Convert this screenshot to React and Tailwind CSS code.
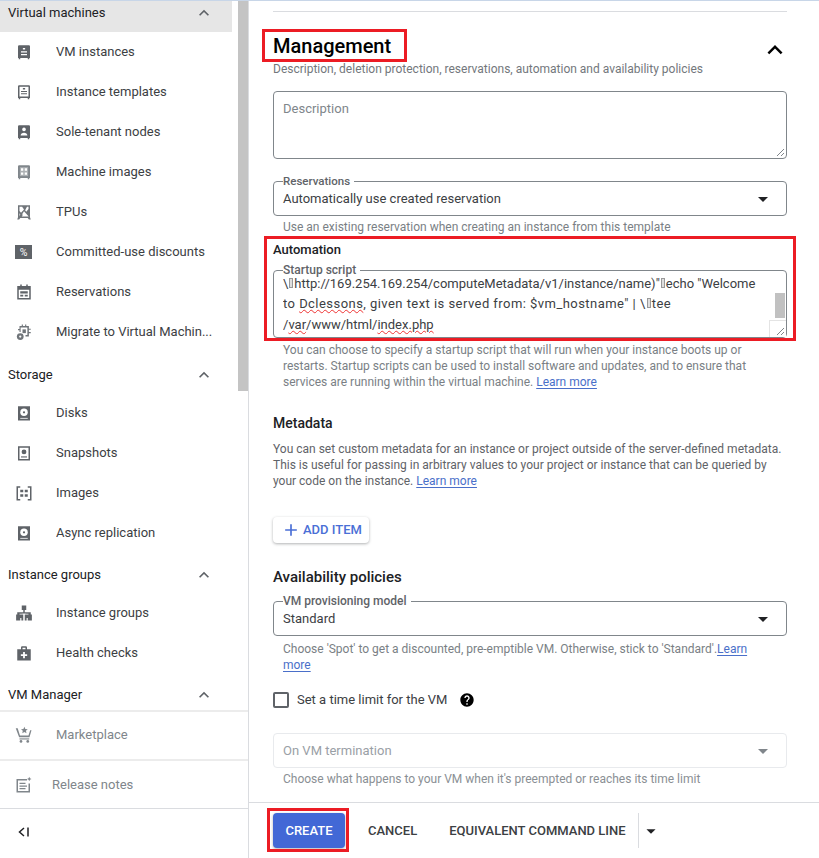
import React from "react";
import { MdKeyboardArrowUp, MdArrowDropDown, MdHelp, MdAdd } from "react-icons/md";

const Ic = ({ children, size = 18, className = "text-[#5f6368]" }) => (
  <svg viewBox="0 0 24 24" width={size} height={size} fill="currentColor" className={"shrink-0 " + className}>{children}</svg>
);
const W = "#fff";
const body = "M4 4.500A1.500 1.500 0 0 1 5.500 3h13A1.500 1.500 0 0 1 20 4.500V20h-1v1.500h-2V20H7v1.500H5V20H4z";
const icons = {
  vm: <Ic><path d={body} /><path d="M10.500 6.500h3v2h-3zM8 11h8v1.700H8zM8 14.500h8v1.700H8z" fill={W} /></Ic>,
  tpl: <Ic><path fillRule="evenodd" d={body + "M6 5v13h12V5z"} /><path d="M10.500 6.500h3v2h-3zM8 10.500h8v1.500H8zM8 13.500h8v1.500H8z" /></Ic>,
  sole: <Ic><path d={body} /><circle cx="12" cy="8.500" r="2.400" fill={W} /><path d="M7.500 16.500c0-2.200 2.200-3.500 4.500-3.500s4.500 1.300 4.500 3.500z" fill={W} /></Ic>,
  image: <Ic className="text-[#80868b]"><path d={body} /><path d="M6.500 5.500h11v12h-11z" fill={W} opacity=".35" /><path d="M8 7h3v3.300H8zM13 7h3v3.300h-3zM8 12.500h3v3.300H8zM13 12.500h3v3.300h-3z" fill={W} /></Ic>,
  tpu: <Ic className="text-[#70757a]"><path d="M4 3h16v16l1 3h-2.500L17 20H7l-1.500 2H3l1-3z" /><path d="M6 5h3.500L12 8.500 8 13 6 10.500zM18 5v3l-3 3.500-1.500-2L16 5zM6 13.500 7 15l-1 3zM12 11l6 6.500V18H9.500l-.5-.5L10.500 16 9.500 15z" fill={W} /></Ic>,
  pct: <svg width="17" height="14" viewBox="0 0 17 14" className="shrink-0"><path d="M0 0h17v3.500a3.500 3.500 0 0 1 0 7V14H0v-3.500a3.500 3.500 0 0 1 0-7z" fill="#5f6368" /><text x="8.500" y="11" textAnchor="middle" fontSize="10.500" fontFamily="Roboto" fill="#fff">%</text></svg>,
  cal: <Ic><path d="M7 2h2v2h6V2h2v2h4v18H3V4h4z" /><path d="M5 9h14v11H5z" fill={W} /><path d="M7 11h10v3H7zM7 15.500h4V18H7zM13 15.500h4V18h-4z" /></Ic>,
  migrate: <Ic className="text-[#70757a]"><path fillRule="evenodd" d="M9 2h1.500v2h3V2H15v2h3.500v3.500H21V9h-2.500v3H21v1.500h-2.500V18H14v-2h2.500V6h-9v6H6V9.500H4V8h2V4h3z" /><path d="M10 8.500h4.500v5H10z" /><circle cx="7" cy="18" r="4.500" /><circle cx="7" cy="18" r="1.500" fill={W} /></Ic>,
  disk: <Ic><path d="M4 3h16v19H4z" /><circle cx="12" cy="11" r="5" fill={W} /><circle cx="12" cy="11" r="1.500" /><path d="M7 18.500h10V20H7z" fill={W} opacity=".7" /></Ic>,
  snap: <Ic><path fillRule="evenodd" d="M4 3h16v19H4zM6 5v15h12V5z" /><circle cx="12" cy="10.500" r="3.200" /><path d="M8 16.500h8V18H8z" /></Ic>,
  imgs: <Ic><path d="M2 3h5v2H4v15h3v2H2zM17 3h5v19h-5v-2h3V5h-3z" /><path d="M7 7.500h4V11H7zM13 7.500h4V11h-4zM7 13.500h4V17H7zM13 13.500h4V17h-4z" /></Ic>,
  group: <Ic><path d="M9 2h6v6h-2v3h8v3h1.500v8H17v-3.500h-1.500V22H13v-8h5v-1h-2.500L12 12.500 8.500 13H6v1h5v8H8.500v-3.500H7V22H1.500v-8H3v-3h8V8H9z" /></Ic>,
  health: <Ic><path d="M8 7V4.500A1.500 1.500 0 0 1 9.500 3h5A1.500 1.500 0 0 1 16 4.500V7h5v15H3V7zm2 0h4V5h-4z" /><path d="M10.800 10.500h2.400v3h3v2.400h-3v3h-2.400v-3h-3v-2.400h3z" fill={W} /></Ic>,
  market: <Ic className="text-[#80868b]"><path d="M1 3h2.600l3 9.500H18l2.200-7H22L19.300 15H5.500z" /><path d="m12.500 1 1.300 3 3.200.3-2.400 2.100.7 3.100-2.800-1.600-2.800 1.600.7-3.100L8 4.300l3.200-.3z" /><path d="M6 16.500h13V18H6z" /><circle cx="8" cy="20.500" r="1.800" /><circle cx="17" cy="20.500" r="1.800" /></Ic>,
  notes: <Ic className="text-[#80868b]"><path fillRule="evenodd" d="M2 4h14v2H4v14h14V10h2v12H2z" /><path d="M6 9h8v1.800H6zM6 12.500h10v1.800H6zM6 16h8v1.800H6z" /><path d="M19 1l.9 2.100L22 4l-2.100.9L19 7l-.9-2.100L16 4l2.100-.9z" /></Ic>,
};

const Head = ({ label, active }) => (
  <div className={"flex items-center justify-between pl-2 text-[13px] text-[#202124] " + (active ? "bg-[#e6e6e6] h-[31px] pb-[7px] mr-[6px] pr-[18px]" : "h-[40px] pr-[24px]")}>
    <span>{label}</span>
    <MdKeyboardArrowUp size={20} className="text-[#5f6368]" />
  </div>
);
const Item = ({ icon, label }) => (
  <div className="flex items-center h-[40px] pl-[15px] text-[13px] text-[#3c4043]">
    <span className="w-[41px] flex items-center">{icons[icon]}</span>
    <span className="truncate w-[170px]">{label}</span>
  </div>
);

const Legend = ({ children, small }) => (
  <span className={"absolute -top-[8px] left-[9px] bg-white pr-[4px] leading-[14px] font-medium text-[#5f6368] " + (small ? "text-[11.500px]" : "text-[12px]")}>{children}</span>
);
const Help = ({ children, className = "" }) => (
  <p className={"text-[12px] leading-[16px] text-[#7a7f85] pl-[10px] " + className}>{children}</p>
);
const Link = ({ children }) => <span className="text-[#4a6fc9] underline underline-offset-2">{children}</span>;
const Select = ({ label, value, className = "", small }) => (
  <div className={"relative flex items-center justify-between h-[35px] border border-[#80868b] rounded-[4px] pl-[9px] pr-[12px] text-[13px] text-[#3c4043] " + className}>
    <Legend small={small}>{label}</Legend>
    <span>{value}</span>
    <MdArrowDropDown size={24} className="text-[#202124] -mr-[1px]" />
  </div>
);
const Tofu = () => <span className="inline-block w-[4px] h-[10px] mx-[1px] bg-[#dedede] border border-[#999]" />;
const Red = ({ className }) => <div className={"absolute border-[3px] border-[#ec1c24] pointer-events-none " + className} />;
const Grip = () => (
  <svg width="9" height="9" viewBox="0 0 9 9" className="absolute right-[1px] bottom-[1px]"><path d="M1 8 8 1M5 8l3-3" stroke="#80868b" strokeWidth="1" /></svg>
);
const Wavy = ({ children }) => <span className="underline decoration-wavy decoration-[#e33] decoration-1">{children}</span>;

export default function App() {
  return (
    <div className="w-[819px] h-[858px] overflow-hidden flex border-t border-[#c8d6e8] bg-white" style={{ fontFamily: "Roboto, 'Liberation Sans', sans-serif" }}>
      <aside className="w-[249px] shrink-0 flex flex-col border-r border-[#dadce0]">
        <div className="h-[709px] flex overflow-hidden">
          <nav className="w-[238px] shrink-0 overflow-hidden">
            <Head label="Virtual machines" active />
            <div>
              <Item icon="vm" label="VM instances" />
              <Item icon="tpl" label="Instance templates" />
              <Item icon="sole" label="Sole-tenant nodes" />
              <Item icon="image" label="Machine images" />
              <Item icon="tpu" label="TPUs" />
              <Item icon="pct" label="Committed-use discounts" />
              <Item icon="cal" label="Reservations" />
              <Item icon="migrate" label="Migrate to Virtual Machin..." />
            </div>
            <div className="mt-[3px]"><Head label="Storage" /></div>
            <div className="-mt-[2px]">
              <Item icon="disk" label="Disks" />
              <Item icon="snap" label="Snapshots" />
              <Item icon="imgs" label="Images" />
              <Item icon="disk" label="Async replication" />
            </div>
            <div className="mt-[2px]"><Head label="Instance groups" /></div>
            <div className="-mt-[2px]">
              <Item icon="group" label="Instance groups" />
              <Item icon="health" label="Health checks" />
            </div>
            <div className="mt-[2px]"><Head label="VM Manager" /></div>
          </nav>
          <div className="w-[10px] bg-white">
            <div className="h-[390px] bg-[#c4c4c4]" />
          </div>
        </div>
        <div className="border-t-2 border-[#ececec] h-[49px] pb-[1px] flex items-center pl-[15px] text-[13px] text-[#80868b]">
          <span className="w-[41px] flex">{icons.market}</span>Marketplace
        </div>
        <div className="border-t-2 border-[#ececec] h-[49px] flex items-center pl-[15px] text-[13px] text-[#80868b]">
          <span className="w-[37px] flex">{icons.notes}</span>Release notes
        </div>
        <div className="border-t border-[#dadce0] flex-1 flex items-start pt-[18px] pl-[18px] text-[#202124]">
          <svg width="12" height="10" viewBox="0 0 12 10" fill="none" stroke="currentColor" strokeWidth="1.500"><path d="M6 1 1.500 5 6 9M10 .5v9" /></svg>
        </div>
      </aside>

      <div className="flex-1 flex flex-col min-w-0">
        <main className="h-[801px] overflow-hidden pl-[24px] pr-[32px] pt-[10px]">
          <div className="border-t border-[#dadce0]" />
          <div className="relative mt-[21px] flex items-start justify-between">
            <h2 className="text-[20px] leading-[26px] font-medium text-black">Management</h2>
            <Red className="-left-[11px] -top-[4px] w-[145px] h-[33px]" />
            <MdKeyboardArrowUp size={30} className="text-black mt-[2px] -mr-[3px]" />
          </div>
          <p className="text-[12px] leading-[16px] text-[#73777c] -mt-[4px]">Description, deletion protection, reservations, automation and availability policies</p>

          <div className="relative mt-[14px] h-[68px] border border-[#80868b] rounded-[4px] pl-[9px] pt-[9px] text-[13px] leading-[16px] text-[#80868b]">
            Description
            <Grip />
          </div>
          <Select className="mt-[22px]" label="Reservations" value="Automatically use created reservation" small />
          <Help className="mt-[3px]">Use an existing reservation when creating an instance from this template</Help>

          <div className="relative mt-[6px]">
            <Red className="-left-[9px] -top-[5px] w-[532px] h-[105px]" />
            <h3 className="text-[13px] leading-[18px] font-medium text-[#202124]">Automation</h3>
            <div className="relative mt-[11px] h-[68px] border border-[#80868b] rounded-[4px] pl-[9px] pt-[2.500px] text-[13px] leading-[20.500px] text-[#3c4043]">
              <Legend>Startup script</Legend>
              <div className="whitespace-nowrap overflow-hidden">
                <div>\<Tofu />http://169.254.169.254/computeMetadata/v1/instance/name)"<Tofu />echo "Welcome</div>
                <div className="tracking-[0.45px]">to <Wavy>Dclessons</Wavy>, given text is served from: $vm_hostname" | \<Tofu />tee</div>
                <div>/<Wavy>var</Wavy>/www/html/<Wavy>index.php</Wavy></div>
              </div>
              <div className="absolute right-[1px] top-[22px] w-[10px] h-[25px] bg-[#c1c1c1]" />
              <div className="absolute right-0 bottom-0 w-[17px] h-[17px] border-l border-t border-[#e4e4e4] bg-white"><Grip /></div>
            </div>
          </div>
          <Help className="mt-[4px]">You can choose to specify a startup script that will run when your instance boots up or<br />restarts. Startup scripts can be used to install software and updates, and to ensure that<br />services are running within the virtual machine. <Link>Learn more</Link></Help>

          <h3 className="mt-[24px] text-[14px] leading-[18px] font-medium text-[#202124]">Metadata</h3>
          <p className="mt-[9px] text-[12px] leading-[16px] text-[#5f6368]">You can set custom metadata for an instance or project outside of the server-defined metadata.<br />This is useful for passing in arbitrary values to your project or instance that can be queried by<br />your code on the instance. <Link>Learn more</Link></p>

          <button className="mt-[28px] flex items-center h-[26px] w-[96px] pl-[8px] gap-[2px] rounded-[4px] bg-white shadow-[0_1px_3px_rgba(60,64,67,0.4)] text-[13px] font-medium text-[#4a6fd6]">
            <MdAdd size={20} />ADD ITEM
          </button>

          <h3 className="mt-[25px] text-[15px] leading-[18px] font-medium text-[#202124]">Availability policies</h3>
          <Select className="mt-[15px]" label="VM provisioning model" value="Standard" />
          <Help className="mt-[5px]">Choose 'Spot' to get a discounted, pre-emptible VM. Otherwise, stick to 'Standard'.<Link>Learn</Link><br /><Link>more</Link></Help>

          <div className="mt-[15px] flex items-center h-[24px] text-[13px] text-[#3c4043]">
            <span className="w-[16px] h-[16px] border-2 border-[#5f6368] rounded-[2px] mr-[8px]" />
            Set a time limit for the VM
            <MdHelp size={16} className="ml-[12px] text-black" />
          </div>

          <div className="mt-[21px] flex items-center justify-between h-[35px] border border-[#e8eaed] rounded-[4px] pl-[9px] pr-[12px] text-[13px] text-[#9aa0a6]">
            On VM termination
            <MdArrowDropDown size={24} className="text-[#80868b] -mr-[1px]" />
          </div>
          <Help className="mt-[3px] text-[#8a8f94]">Choose what happens to your VM when it's preempted or reaches its time limit</Help>
        </main>

        <footer className="flex-1 border-t border-[#dadce0] pl-[24px] flex items-center text-[13px] font-medium text-[#3c4043]">
          <button className="relative w-[72px] h-[35px] rounded-[4px] bg-[#4268d6] text-white shadow-[0_1px_3px_rgba(60,64,67,0.4)]">
            CREATE
            <Red className="-left-[6px] -top-[5px] w-[82px] h-[44px]" />
          </button>
          <span className="ml-[23px]">CANCEL</span>
          <span className="ml-[32px]">EQUIVALENT COMMAND LINE</span>
          <span className="ml-[12px] h-[35px] border-l border-[#dadce0]" />
          <MdArrowDropDown size={22} className="ml-[1px] text-[#202124]" />
        </footer>
      </div>
    </div>
  );
}
